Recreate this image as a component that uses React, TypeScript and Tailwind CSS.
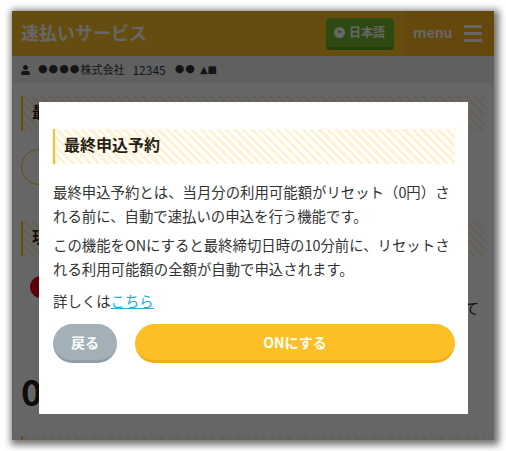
import React from 'react';
import { FaUser } from 'react-icons/fa';

const stripes = 'bg-[repeating-linear-gradient(45deg,#fff3d6_0,#fff3d6_3px,#ffffff_3px,#ffffff_6px)]';

const Heading: React.FC<{ text?: string }> = ({ text }) => (
  <h2 className={`border-l-2 border-[#fcc026] ${stripes} pl-[9px] h-[35px] leading-[31px] text-[16px] font-bold text-[#2b1f14]`}>
    {text}
  </h2>
);

const App: React.FC = () => {
  return (
    <div className="w-[506px] h-[451px] bg-white pt-[11px] px-[12px] overflow-hidden font-['Noto_Sans_CJK_JP','Noto_Sans',sans-serif]">
      <div className="relative w-[482px] h-[429px] bg-white shadow-[2px_2px_7px_3px_rgba(0,0,0,0.55)] overflow-hidden">
        <header className="flex items-center h-[45px] bg-[#fcc026]">
          <h1 className="flex-1 pl-[9px] pb-[3px] text-[18px] font-bold text-white">速払いサービス</h1>
          <button className="flex items-center gap-[4px] w-[68px] h-[32px] pl-[8px] mr-[10px] rounded-[4px] bg-[#76b82a] border-b-[3px] border-[#5c9a1c] text-white text-[12px] font-bold">
            <svg viewBox="0 0 12 12" className="w-[11px] h-[11px]">
              <circle cx="6" cy="6" r="6" fill="#ffffff" />
              <path d="M4 3.2 L8.6 4.8 L5.2 7 Z" fill="#76b82a" />
            </svg>
            日本語
          </button>
          <div className="flex items-center w-[90px] h-full pl-[9px] bg-[#fab41e] text-white">
            <span className="text-[14px] font-bold w-[51px] pb-[2px]">menu</span>
            <div className="flex flex-col gap-[4px] w-[18px]">
              <span className="h-[3px] bg-white" />
              <span className="h-[3px] bg-white" />
              <span className="h-[3px] bg-white" />
            </div>
          </div>
        </header>
        <div className="flex items-center h-[27px] pl-[9px] bg-[#f0f0f0] text-[11px] text-[#333] font-['DejaVu_Sans','Noto_Sans_CJK_JP',sans-serif]">
          <FaUser className="w-[9px] h-[10px] mr-[8px]" />
          <span className="tracking-[1px]">●●●●</span>
          <span className="font-['Noto_Sans_CJK_JP',sans-serif]">株式会社</span>
          <span className="ml-[8px] text-[12px] text-[#24384d] font-['Noto_Sans_CJK_JP',sans-serif]">12345</span>
          <span className="ml-[9px] tracking-[1px]">●●</span>
          <span className="ml-[4px] text-[10px]">▲■</span>
        </div>
        <main className="px-[9px] pt-[13px]">
          <Heading text="最" />
          <div className="mt-[18px] w-[60px] h-[36px] rounded-full border border-[#fcc026]" />
          <div className="mt-[36px]">
            <Heading text="現" />
          </div>
          <div className="flex items-start mt-[20px]">
            <div className="ml-[9px] w-[30px] h-[22px] rounded-full bg-[#e60012]" />
            <p className="flex-1 pt-[20px] pr-[6px] text-right text-[15px] leading-[24px] text-[#333]">て</p>
          </div>
          <p className="mt-[48px] text-[36px] leading-[44px] font-bold text-[#222]">0</p>
          <div className="mt-[24px]">
            <Heading />
          </div>
        </main>
        <div className="absolute inset-0 bg-black/60" />
        <div className="absolute left-[27px] top-[91px] w-[429px] h-[312px] bg-white pt-[27px] pl-[14px] pr-[13px]">
          <Heading text="最終申込予約" />
          <div className="mt-[16px] text-[14.4px] leading-[24px] text-[#333]">
            <p>最終申込予約とは、当月分の利用可能額がリセット（0円）される前に、自動で速払いの申込を行う機能です。</p>
            <p className="mt-[5px]">この機能をONにすると最終締切日時の10分前に、リセットされる利用可能額の全額が自動で申込されます。</p>
            <p className="mt-[8px]">
              詳しくは<a href="#" className="text-[#29abd9] underline">こちら</a>
            </p>
          </div>
          <div className="flex gap-[18px] mt-[11px]">
            <button className="w-[64px] h-[39px] rounded-[20px] bg-[#a3b0b8] border-b-[3px] border-[#8f9da5] text-white text-[14px] font-bold">
              戻る
            </button>
            <button className="flex-1 h-[39px] rounded-[20px] bg-[#fcc026] border-b-[3px] border-[#eeae1c] text-white text-[14px] font-bold">
              ONにする
            </button>
          </div>
        </div>
      </div>
    </div>
  );
};

export default App;
